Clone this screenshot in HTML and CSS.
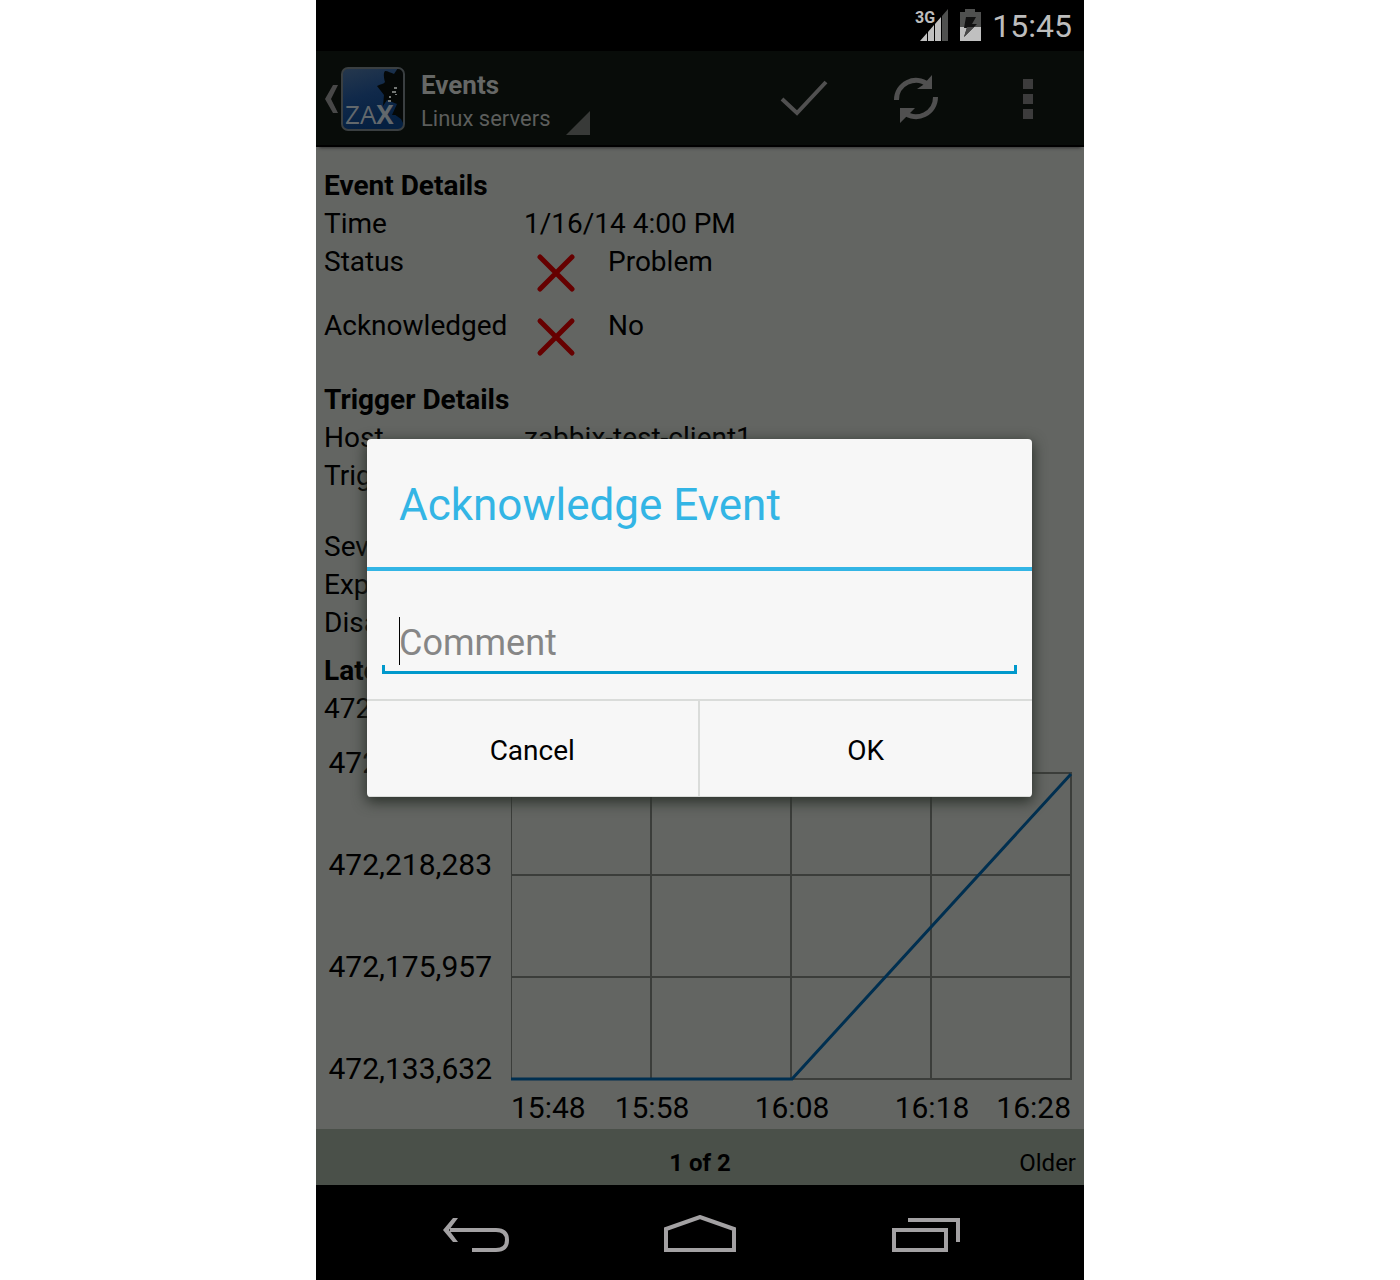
FILE: index.html
```html
<!DOCTYPE html>
<html lang="en">
<head>
<meta charset="utf-8">
<meta name="viewport" content="width=device-width, initial-scale=1">
<title>Events</title>
<link rel="stylesheet" href="styles.css">
</head>
<body>
<div class="phone">
  <div class="status-bar">
    <svg class="signal" width="34" height="34" viewBox="0 0 34 34" aria-hidden="true">
      <path d="M5 33L12 25V33ZM13 24L19 17V33H13ZM20 16L26 9V33H20Z" fill="#c0c0c0"/>
      <path d="M27 8L33 1V33H27Z" fill="#4f504f"/>
      <text class="network" x="0" y="15">3G</text>
    </svg>
    <svg class="battery" width="21" height="32" viewBox="0 0 21 32" aria-hidden="true">
      <path d="M0 3H5V0H15V3H21V18H0Z" fill="#4f504f"/>
      <path d="M0 18H21V32H0Z" fill="#c0c0c0"/>
      <path d="M6 8H16L12 15H17L4 28L7 19H4Z" fill="#111"/>
      <path d="M4 28L7 18H14Z" fill="#484848"/>
    </svg>
    <time class="clock">15:45</time>
  </div>

  <div class="screen">
    <header class="action-bar">
      <button class="up" aria-label="Navigate up">
        <svg width="15" height="28" viewBox="0 0 15 28"><path d="M9 0H14L7 14L14 28H9L1 14Z" fill="#484848"/></svg>
        <svg width="64" height="64" viewBox="0 0 64 64">
          <defs>
            <linearGradient id="sky" x1="0" y1="0" x2="0.3" y2="1">
              <stop offset="0" stop-color="#26384d"/>
              <stop offset="0.5" stop-color="#10294a"/>
              <stop offset="1" stop-color="#052041"/>
            </linearGradient>
          </defs>
          <rect x="1" y="1" width="62" height="62" rx="6" fill="url(#sky)"/>
          <path d="M44 4C47 4 50 6 53 7L57 1H63V48H51L56 37L46 33L42 39L43 28L36 19C40 17 43 17 44 15C43 11 42 6 44 4Z" fill="#050807"/>
          <path d="M53 47H63V58L60 52Z" fill="#050807"/>
          <path d="M53 20h3v2h-3zM51 24h4v2h-4zM48 29h2v2h-2zM47 33h3v2h-3zM54 27h2v1h-2z" fill="#737775"/>
          <text class="logo-text" x="4" y="57">ZA<tspan class="logo-x">X</tspan></text>
          <rect x="1" y="1" width="62" height="62" rx="6" fill="none" stroke="#3a3f41" stroke-width="2"/>
        </svg>
      </button>
      <button class="picker">
        <span class="picker-text"><span class="title">Events</span><span class="subtitle">Linux servers</span></span>
        <svg width="24" height="24" viewBox="0 0 24 24" aria-hidden="true"><path d="M24 0V24H0Z" fill="#383a38"/></svg>
      </button>
      <button class="action" aria-label="Acknowledge">
        <svg width="48" height="48" viewBox="0 0 48 48"><path d="M2 24L17 38L46 7" fill="none" stroke="#505050" stroke-width="4"/></svg>
      </button>
      <button class="action" aria-label="Refresh">
        <svg width="48" height="48" viewBox="0 0 48 48">
          <path d="M4.500 25A19.500 19.500 0 0 1 36 9.500M43.500 22A19.500 19.500 0 0 1 12 37.500" fill="none" stroke="#505050" stroke-width="5"/>
          <path d="M40 0V14H25L31 10ZM8 48V33H23L18 38Z" fill="#505050"/>
        </svg>
      </button>
      <button class="action" aria-label="More options">
        <svg width="10" height="40" viewBox="0 0 10 40"><path d="M0 0H10V10H0ZM0 15H10V25H0ZM0 30H10V40H0Z" fill="#3c3c3c"/></svg>
      </button>
    </header>

    <main class="details">
      <section class="block">
        <h2>Event Details</h2>
        <dl>
          <dt>Time</dt><dd>1/16/14 4:00 PM</dd>
          <dt>Status</dt>
          <dd class="flagged"><svg class="cross" viewBox="0 0 64 64" aria-hidden="true"><path d="M16 15L48 47M48 15L16 47"/></svg><span>Problem</span></dd>
          <dt>Acknowledged</dt>
          <dd class="flagged"><svg class="cross" viewBox="0 0 64 64" aria-hidden="true"><path d="M16 15L48 47M48 15L16 47"/></svg><span>No</span></dd>
        </dl>
      </section>
      <section class="block">
        <h2>Trigger Details</h2>
        <dl>
          <dt>Host</dt><dd>zabbix-test-client1</dd>
          <dt>Trigger</dt><dd class="two-lines"></dd>
          <dt>Severity</dt><dd></dd>
          <dt>Expression</dt><dd></dd>
          <dt>Disabled</dt><dd></dd>
        </dl>
      </section>
      <section class="block">
        <h2>Latest Data</h2>
        <p>472,260,608</p>
      </section>
      <svg class="chart" viewBox="0 0 768 402" role="img" aria-label="Latest data history">
        <path class="grid" d="M195 46H756M195 148H756M195 250H756M195 352H756M335 46V352M475 46V352M615 46V352M755 46V352"/>
        <path class="grid edge" d="M195.500 46V352"/>
        <path class="series" d="M195 352H476L755 47"/>
        <g class="y-axis">
          <text x="176" y="46">472,260,608</text>
          <text x="176" y="148">472,218,283</text>
          <text x="176" y="250">472,175,957</text>
          <text x="176" y="352">472,133,632</text>
        </g>
        <g class="x-axis">
          <text class="first" x="195" y="391">15:48</text>
          <text x="336" y="391">15:58</text>
          <text x="476" y="391">16:08</text>
          <text x="616" y="391">16:18</text>
          <text class="last" x="755" y="391">16:28</text>
        </g>
      </svg>
    </main>

    <footer class="pager">
      <strong>1 of 2</strong>
      <a class="older" href="#older">Older</a>
    </footer>

    <div class="overlay">
      <form class="dialog" role="dialog" aria-labelledby="dialog-title">
        <h1 id="dialog-title">Acknowledge Event</h1>
        <div class="field"><input type="text" placeholder="Comment" aria-label="Comment"></div>
        <div class="buttons">
          <button type="button">Cancel</button>
          <button type="submit">OK</button>
        </div>
      </form>
    </div>
  </div>

  <nav class="nav-bar">
    <button aria-label="Back">
      <svg width="72" height="40" viewBox="0 0 72 40"><path d="M12 15H58C66 15 69 19 69 25C69 31 66 35 58 35H34" fill="none" stroke="#a3a1a3" stroke-width="4"/><path d="M5 15L15 3H20L11 15L20 27H15Z" fill="#a3a1a3"/></svg>
    </button>
    <button aria-label="Home">
      <svg width="72" height="40" viewBox="0 0 72 40"><path d="M2 35V14L36 2L70 14V35Z" fill="none" stroke="#a3a1a3" stroke-width="4"/></svg>
    </button>
    <button aria-label="Recent apps">
      <svg width="72" height="40" viewBox="0 0 72 40"><path d="M4 15H56V35H4ZM18 5H68V27" fill="none" stroke="#a3a1a3" stroke-width="4"/></svg>
    </button>
  </nav>
</div>
</body>
</html>
```

FILE: styles.css
```css
* {
  box-sizing: border-box;
}

body {
  margin: 0;
  background: #fff;
  color: #000;
  font-family: Roboto, sans-serif;
  font-size: 28px;
  line-height: 33px;
}

button,
input {
  margin: 0;
  padding: 0;
  border: 0;
  background: none;
  color: inherit;
  font: inherit;
}

h1,
h2,
p,
dl,
dd {
  margin: 0;
}

svg {
  display: block;
  flex: none;
}

.phone {
  display: flex;
  flex-direction: column;
  max-width: 768px;
  min-height: 100vh;
  margin: 0 auto;
  background: #000;
}

.status-bar {
  display: flex;
  align-items: center;
  justify-content: flex-end;
  gap: 11px;
  height: 51px;
  padding: 0 12px 2px 0;
  color: #bdbdbd;
}

.network {
  fill: #bdbdbd;
  font-size: 16px;
  font-weight: 700;
}

.clock {
  padding-top: 4px;
  font-size: 32px;
}

.screen {
  position: relative;
  display: flex;
  flex: 1;
  flex-direction: column;
  background: #636562;
}

.action-bar {
  display: flex;
  align-items: center;
  height: 96px;
  padding: 2px 0 0 8px;
  border-bottom: 2px solid #000;
  background: #080c09;
  box-shadow: 0 4px 3px -3px #333;
}

.up {
  display: flex;
  align-items: center;
  gap: 2px;
}

.logo-text {
  fill: #62686c;
  font-family: "Open Sans", sans-serif;
  font-size: 26px;
}

.logo-x {
  font-weight: 700;
}

.picker {
  display: flex;
  align-items: flex-end;
  gap: 15px;
  margin: 0 auto 0 16px;
  padding-top: 6px;
  text-align: left;
}

.picker-text {
  display: flex;
  flex-direction: column;
}

.title {
  color: #666866;
  font-size: 26px;
  font-weight: 700;
}

.subtitle {
  color: #5c5e5c;
  font-size: 22px;
}

.action {
  display: flex;
  align-items: center;
  justify-content: center;
  width: 112px;
  height: 92px;
}

.details {
  flex: 1;
  padding-top: 9px;
}

.block {
  padding: 10px 8px 0;
}

h2,
p,
dt,
dd {
  padding: 3px 0 2px;
}

h2 {
  font-size: 28px;
  font-weight: 700;
}

dl {
  display: grid;
  grid-template-columns: 200px 1fr;
}

.flagged {
  display: flex;
  gap: 20px;
  padding: 0;
}

.flagged span {
  padding-top: 3px;
}

.cross {
  width: 64px;
  height: 64px;
  fill: none;
  stroke: #660000;
  stroke-width: 5;
  stroke-linecap: round;
}

.two-lines {
  min-height: 71px;
}

.chart {
  width: 100%;
  height: auto;
  font-size: 30px;
}

.grid {
  fill: none;
  stroke: #3b3d3a;
  stroke-width: 2;
}

.edge {
  stroke-width: 1;
}

.series {
  fill: none;
  stroke: #002f50;
  stroke-width: 3;
}

.y-axis {
  text-anchor: end;
}

.x-axis {
  text-anchor: middle;
}

.first {
  text-anchor: start;
}

.last {
  text-anchor: end;
}

.pager {
  display: grid;
  grid-template-columns: 1fr auto 1fr;
  align-items: center;
  height: 56px;
  padding: 12px 8px 0;
  background: #4a5049;
  font-size: 24px;
}

.pager strong {
  grid-column: 2;
  font-weight: 700;
}

.older {
  justify-self: end;
  color: inherit;
  text-decoration: none;
}

.overlay {
  position: absolute;
  inset: 0;
  display: flex;
  align-items: center;
  justify-content: center;
  padding: 0 52px 0 51px;
}

.dialog {
  flex: 1;
  overflow: hidden;
  border-radius: 4px;
  background: #f7f7f7;
  box-shadow: 0 4px 14px 1px #2a302a;
}

.dialog h1 {
  padding: 40px 32px 36px;
  border-bottom: 4px solid #33b5e5;
  color: #33b5e5;
  font-size: 44px;
  font-weight: 400;
  line-height: 52px;
}

.field {
  padding: 46px 15px 25px;
  border-bottom: 2px solid #dadcda;
}

.field input {
  display: block;
  width: 100%;
  height: 57px;
  padding: 0 17px 2px;
  border-bottom: 3px solid #0099cc;
  outline: 0;
  background:
    linear-gradient(#000, #000) 17px 0 / 1px 48px no-repeat,
    linear-gradient(#0099cc, #0099cc) left bottom / 3px 6px no-repeat,
    linear-gradient(#0099cc, #0099cc) right bottom / 3px 6px no-repeat;
  font-size: 36px;
}

.field input::placeholder {
  color: #868686;
}

.buttons {
  display: grid;
  grid-template-columns: 1fr 1fr;
  border-bottom: 1px solid #dadcda;
}

.buttons button {
  height: 95px;
  padding-top: 3px;
}

.buttons button:first-child {
  border-right: 2px solid #dadcda;
}

.nav-bar {
  display: flex;
  align-items: center;
  justify-content: center;
  gap: 154px;
  height: 95px;
  padding-top: 5px;
}
```
